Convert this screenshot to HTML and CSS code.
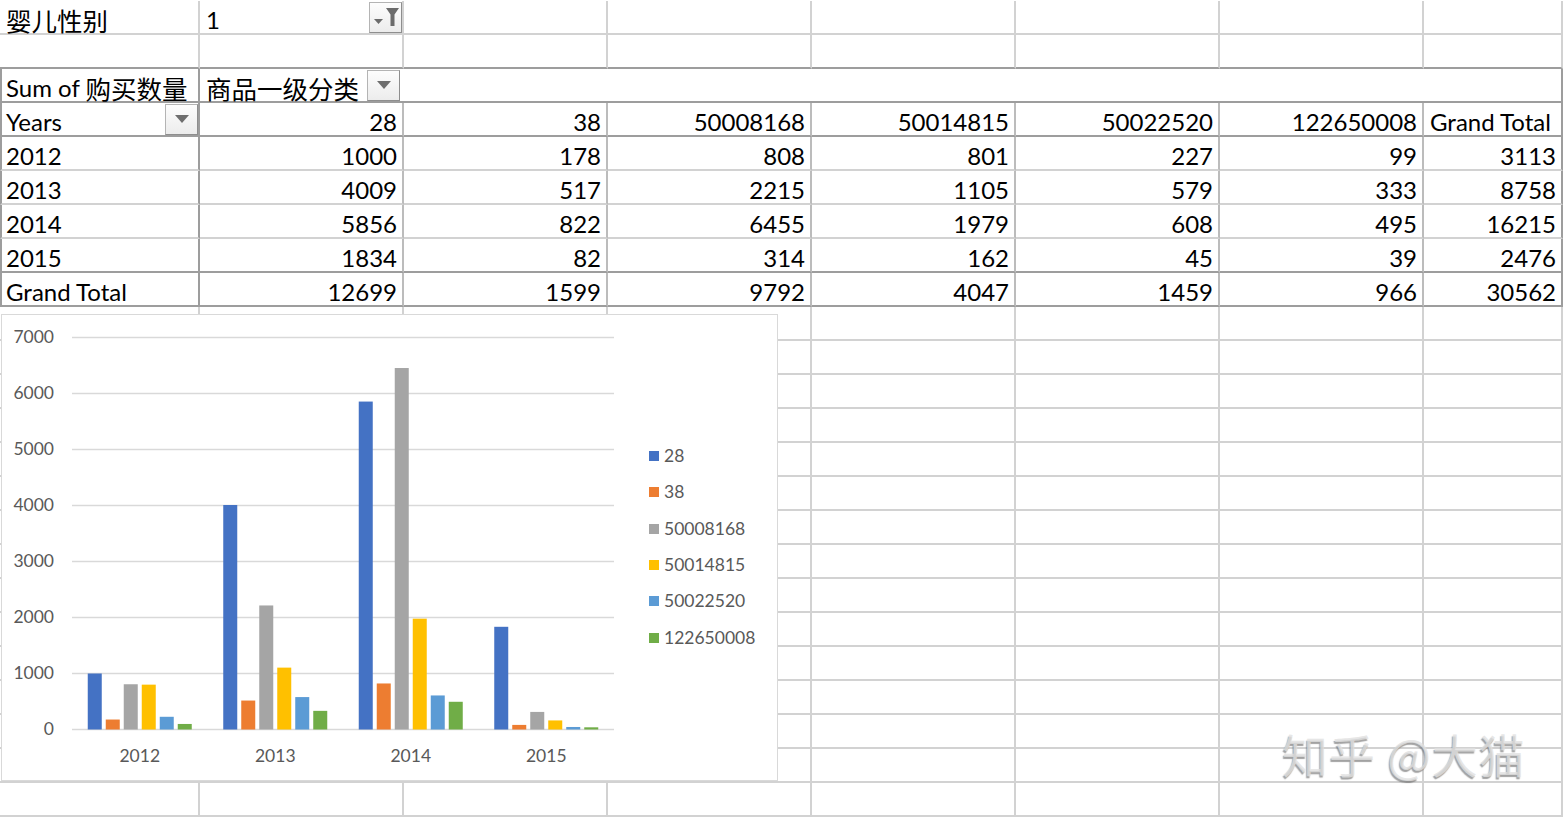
FILE: index.html
```html
<!DOCTYPE html>
<html lang="zh">
<head>
    <meta charset="UTF-8">
    <meta name="viewport" content="width=device-width, initial-scale=1.0">
    <title>Pivot</title>
    <link rel="stylesheet" href="styles.css">
</head>
<body>
    <div class="page">
        <div class="sheet" id="sheet">
            <!-- row 1: report filter -->
            <div class="cell"><span class="zh">婴儿性别</span></div>
            <div class="cell split">1
                <span class="drop-btn">
                    <svg width="31" height="29" viewBox="0 0 31 29">
                        <path d="M4 16 H13 L8.5 21 Z" fill="#6b6b6b"/>
                        <path d="M16 5 H29 L24.5 11.5 V23 H20.5 V11.5 Z" fill="#6b6b6b"/>
                    </svg>
                </span>
            </div>
            <div class="cell"></div><div class="cell"></div><div class="cell"></div>
            <div class="cell"></div><div class="cell"></div><div class="cell"></div>
            <div class="cell edge"></div>

            <!-- row 2 -->
            <div class="cell top"></div><div class="cell top"></div><div class="cell top"></div>
            <div class="cell top"></div><div class="cell top"></div><div class="cell top"></div>
            <div class="cell top"></div><div class="cell top"></div>
            <div class="cell edge"></div>

            <!-- row 3: pivot header -->
            <div class="cell pv-first line">Sum of&nbsp;<span class="zh">购买数量</span></div>
            <div class="cell pv-cat line"><span class="zh">商品一级分类</span><span class="drop-btn"><i class="tri"></i></span></div>
            <div class="cell edge"></div>

            <!-- row 4: column labels -->
            <div class="cell pv-first line split">Years<span class="drop-btn"><i class="tri"></i></span></div>
            <div class="cell pv num line">28</div>
            <div class="cell pv num line">38</div>
            <div class="cell pv num line">50008168</div>
            <div class="cell pv num line">50014815</div>
            <div class="cell pv num line">50022520</div>
            <div class="cell pv num line">122650008</div>
            <div class="cell pv-end line">Grand Total</div>
            <div class="cell edge"></div>

            <!-- data rows -->
            <div class="cell pv-first">2012</div>
            <div class="cell pv num">1000</div>
            <div class="cell pv num">178</div>
            <div class="cell pv num">808</div>
            <div class="cell pv num">801</div>
            <div class="cell pv num">227</div>
            <div class="cell pv num">99</div>
            <div class="cell pv-end num">3113</div>
            <div class="cell edge"></div>

            <div class="cell pv-first">2013</div>
            <div class="cell pv num">4009</div>
            <div class="cell pv num">517</div>
            <div class="cell pv num">2215</div>
            <div class="cell pv num">1105</div>
            <div class="cell pv num">579</div>
            <div class="cell pv num">333</div>
            <div class="cell pv-end num">8758</div>
            <div class="cell edge"></div>

            <div class="cell pv-first">2014</div>
            <div class="cell pv num">5856</div>
            <div class="cell pv num">822</div>
            <div class="cell pv num">6455</div>
            <div class="cell pv num">1979</div>
            <div class="cell pv num">608</div>
            <div class="cell pv num">495</div>
            <div class="cell pv-end num">16215</div>
            <div class="cell edge"></div>

            <div class="cell pv-first line">2015</div>
            <div class="cell pv num line">1834</div>
            <div class="cell pv num line">82</div>
            <div class="cell pv num line">314</div>
            <div class="cell pv num line">162</div>
            <div class="cell pv num line">45</div>
            <div class="cell pv num line">39</div>
            <div class="cell pv-end num line">2476</div>
            <div class="cell edge"></div>

            <!-- grand total -->
            <div class="cell pv-first line">Grand Total</div>
            <div class="cell pv num line">12699</div>
            <div class="cell pv num line">1599</div>
            <div class="cell pv num line">9792</div>
            <div class="cell pv num line">4047</div>
            <div class="cell pv num line">1459</div>
            <div class="cell pv num line">966</div>
            <div class="cell pv-end num line">30562</div>
            <div class="cell edge"></div>
        </div>

        <div class="chart">
            <svg width="775" height="465" viewBox="2 315 775 465">
                <g class="grid-lines">
                    <line x1="72" x2="614" y1="337.5" y2="337.5"/>
                    <line x1="72" x2="614" y1="393.5" y2="393.5"/>
                    <line x1="72" x2="614" y1="449.5" y2="449.5"/>
                    <line x1="72" x2="614" y1="505.5" y2="505.5"/>
                    <line x1="72" x2="614" y1="561.5" y2="561.5"/>
                    <line x1="72" x2="614" y1="617.5" y2="617.5"/>
                    <line x1="72" x2="614" y1="673.5" y2="673.5"/>
                    <line x1="72" x2="614" y1="729.5" y2="729.5"/>
                </g>
                <g id="bars"></g>
                <g class="axis-y">
                    <text x="54" y="343">7000</text>
                    <text x="54" y="399">6000</text>
                    <text x="54" y="455">5000</text>
                    <text x="54" y="511">4000</text>
                    <text x="54" y="567">3000</text>
                    <text x="54" y="623">2000</text>
                    <text x="54" y="679">1000</text>
                    <text x="54" y="735">0</text>
                </g>
                <g class="axis-x">
                    <text x="139.75" y="762">2012</text>
                    <text x="275.25" y="762">2013</text>
                    <text x="410.75" y="762">2014</text>
                    <text x="546.25" y="762">2015</text>
                </g>
                <g class="legend">
                    <rect x="649" y="451" width="10" height="10" fill="#4472c4"/>
                    <text x="664" y="462">28</text>
                    <rect x="649" y="487" width="10" height="10" fill="#ed7d31"/>
                    <text x="664" y="498">38</text>
                    <rect x="649" y="524" width="10" height="10" fill="#a5a5a5"/>
                    <text x="664" y="535">50008168</text>
                    <rect x="649" y="560" width="10" height="10" fill="#ffc000"/>
                    <text x="664" y="571">50014815</text>
                    <rect x="649" y="596" width="10" height="10" fill="#5b9bd5"/>
                    <text x="664" y="607">50022520</text>
                    <rect x="649" y="633" width="10" height="10" fill="#70ad47"/>
                    <text x="664" y="644">122650008</text>
                </g>
            </svg>
        </div>

        <div class="watermark">知乎 @大猫</div>
    </div>

    <script>
        // Fill the rest of the sheet with empty rows
        const sheet = document.getElementById('sheet');
        for (let r = 0; r < 15; r++) {
            for (let c = 0; c < 9; c++) {
                const cell = document.createElement('div');
                cell.className = c === 8 ? 'cell edge' : 'cell';
                sheet.appendChild(cell);
            }
        }

        // Column chart: one group per year, one bar per category
        const years = [
            [1000, 178, 808, 801, 227, 99],
            [4009, 517, 2215, 1105, 579, 333],
            [5856, 822, 6455, 1979, 608, 495],
            [1834, 82, 314, 162, 45, 39]
        ];
        const colors = ['#4472c4', '#ed7d31', '#a5a5a5', '#ffc000', '#5b9bd5', '#70ad47'];
        const bars = document.getElementById('bars');
        years.forEach((values, g) => {
            values.forEach((v, i) => {
                const h = v * 0.056;
                const rect = document.createElementNS('http://www.w3.org/2000/svg', 'rect');
                rect.setAttribute('x', 87.75 + g * 135.5 + i * 18);
                rect.setAttribute('y', 729.5 - h);
                rect.setAttribute('width', 14);
                rect.setAttribute('height', h);
                rect.setAttribute('fill', colors[i]);
                bars.appendChild(rect);
            });
        });
    </script>
</body>
</html>
```

FILE: styles.css
```css
body {
    margin: 0;
    font-family: Lato, "Noto Sans CJK SC", sans-serif;
    font-size: 24px;
    color: #000;
    background: #fff;
    overflow: hidden;
}
.page {
    position: relative;
    width: 1568px;
    height: 818px;
}
.sheet {
    display: grid;
    grid-template-columns: 200px repeat(6, 204px) 139px 5px;
    grid-auto-rows: 34px;
    padding-top: 1px;
}
.cell {
    box-sizing: border-box;
    display: flex;
    align-items: center;
    padding: 6px 5px 0 6px;
    border-right: 2px solid #d2d2d2;
    border-bottom: 2px solid #d2d2d2;
    line-height: 1;
    white-space: nowrap;
}
.edge {
    border: none;
    padding: 0;
}
.num {
    justify-content: flex-end;
}
.split {
    justify-content: space-between;
    padding-right: 0;
}
.zh {
    font-family: "Noto Sans CJK SC", sans-serif;
    font-size: 25.5px;
}

/* pivot table borders */
.top {
    border-bottom-color: #9d9d9d;
}
.pv {
    border-right-color: #bcbcbc;
}
.pv-first {
    border-left: 2px solid #9d9d9d;
    border-right-color: #9d9d9d;
    padding-left: 4px;
}
.pv-end {
    border-right-color: #9d9d9d;
}
.pv-cat {
    grid-column: span 7;
    border-right-color: #9d9d9d;
    gap: 8px;
}
.line {
    border-bottom-color: #9d9d9d;
}

/* filter / dropdown buttons */
.drop-btn {
    box-sizing: border-box;
    display: flex;
    align-items: center;
    justify-content: center;
    width: 33px;
    height: 31px;
    margin-top: -6px;
    border: 1px solid #b4b4b4;
    border-right-color: #8e8e8e;
    border-bottom-color: #8e8e8e;
    background: linear-gradient(#fdfdfd, #ececec);
}
.tri {
    width: 0;
    height: 0;
    border-left: 7px solid transparent;
    border-right: 7px solid transparent;
    border-top: 8px solid #6e6e6e;
}

/* chart */
.chart {
    position: absolute;
    left: 1px;
    top: 314px;
    width: 777px;
    height: 467px;
    box-sizing: border-box;
    border: 1px solid #d9d9d9;
    background: #fff;
}
.chart svg {
    display: block;
}
.grid-lines line {
    stroke: #d9d9d9;
    stroke-width: 1.5;
}
.chart text {
    font-family: Lato, sans-serif;
    font-size: 17.5px;
    fill: #595959;
}
.axis-y text {
    text-anchor: end;
}
.axis-x text {
    text-anchor: middle;
}

.watermark {
    position: absolute;
    left: 1282px;
    top: 730px;
    font-family: "Noto Sans CJK SC", sans-serif;
    font-size: 46px;
    letter-spacing: 1px;
    line-height: 1;
    color: rgba(225, 225, 225, 0.8);
    text-shadow: -1px 2px 1px rgba(100, 100, 100, 0.6);
    white-space: nowrap;
}
```
